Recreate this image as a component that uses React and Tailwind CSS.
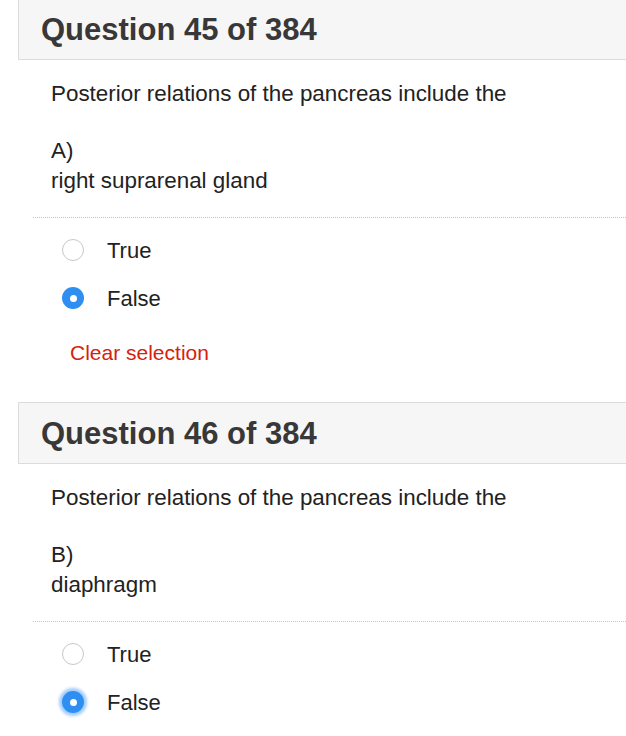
import React, { useState } from "react";

const questions = [
  { num: 45, letter: "A)", option: "right suprarenal gland", answer: "False", showClear: true },
  { num: 46, letter: "B)", option: "diaphragm", answer: "False", focused: true },
];

const Radio = ({ checked, focused, label, onClick }) => (
  <button onClick={onClick} className="flex items-center h-[48px] w-full text-left">
    <span
      className={
        checked
          ? `w-[22px] h-[22px] rounded-full bg-[#2f8ef2] flex items-center justify-center ${
              focused ? "shadow-[0_0_3px_3px_rgba(47,142,242,0.45)]" : ""
            }`
          : "w-[22px] h-[22px] rounded-full bg-white border border-[#c8c8c8]"
      }
    >
      {checked && <span className="w-[7px] h-[7px] rounded-full bg-white" />}
    </span>
    <span className="ml-[23px] text-[22px] text-[#222]">{label}</span>
  </button>
);

const Question = ({ q, first }) => {
  const [value, setValue] = useState(q.answer);

  return (
    <div className={first ? "-mt-[2px]" : "mt-[34px]"}>
      <div className="ml-[18px] w-[640px] h-[62px] border border-[#dcdcdc] bg-[#f6f6f6] flex items-center pl-[22px] pt-[2px]">
        <h2 className="text-[31px] font-bold text-[#383838]">
          Question {q.num} of 384
        </h2>
      </div>
      <div className="pl-[33px]">
        <p className="pl-[18px] mt-[19px] text-[22.4px] leading-[30px] text-[#222]">
          Posterior relations of the pancreas include the
        </p>
        <div className="pl-[18px] mt-[27px] text-[22.4px] leading-[30px] text-[#222]">
          <p>{q.letter}</p>
          <p>{q.option}</p>
        </div>
        <div className="mt-[21px] border-t border-dotted border-[#c4c4c4]" />
        <div className="pl-[29px] mt-[8px]">
          {["True", "False"].map((opt) => (
            <Radio
              key={opt}
              label={opt}
              checked={value === opt}
              focused={q.focused}
              onClick={() => setValue(opt)}
            />
          ))}
        </div>
        {q.showClear && (
          <button
            onClick={() => setValue(null)}
            className="ml-[37px] mt-[16px] text-[21px] leading-[30px] text-[#d6210d]"
          >
            Clear selection
          </button>
        )}
      </div>
    </div>
  );
};

export default function App() {
  return (
    <div className="w-[626px] h-[736px] overflow-hidden bg-white font-['Liberation_Sans',Arial,sans-serif]">
      {questions.map((q, i) => (
        <Question key={q.num} q={q} first={i === 0} />
      ))}
    </div>
  );
}
